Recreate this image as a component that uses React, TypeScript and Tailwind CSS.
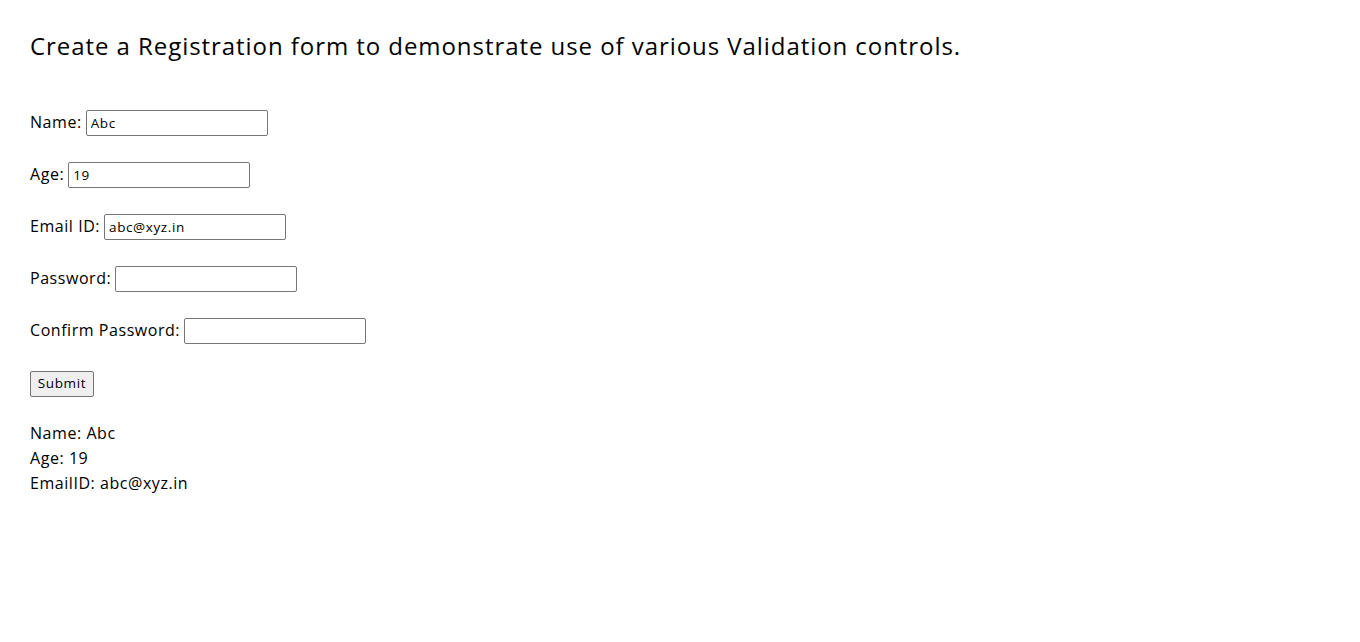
import React from "react";

const font = { fontFamily: '"Open Sans", "Noto Sans", sans-serif' };

function Row({ label, value }: { label: string; value: string }) {
  return (
    <div className="flex items-center h-[26px] text-[16px] tracking-[0.55px] text-black">
      <span className="mr-[4px] pb-[3px]">{label}</span>
      <input
        readOnly
        value={value}
        className="w-[182px] h-[26px] border border-[#767676] rounded-[2px] px-[4px] text-[13.5px] tracking-[0.6px] text-black outline-none"
        style={font}
      />
    </div>
  );
}

export default function App() {
  return (
    <div className="bg-white min-h-[642px] pl-[30px] pt-[28px] text-black" style={font}>
      <h2 className="text-[24px] leading-[36px] font-normal tracking-[0.94px]">
        Create a Registration form to demonstrate use of various Validation controls.
      </h2>
      <div className="mt-[46px] flex flex-col gap-[26px]">
        <Row label="Name:" value="Abc" />
        <Row label="Age:" value="19" />
        <Row label="Email ID:" value="abc@xyz.in" />
        <Row label="Password:" value="" />
        <Row label="Confirm Password:" value="" />
        <div className="h-[26px]">
          <button
            className="h-[26px] w-[64px] pb-[1px] bg-[#efefef] border border-[#767676] rounded-[2px] text-[13.5px] tracking-[0.6px] text-black"
            style={font}
          >
            Submit
          </button>
        </div>
      </div>
      <div className="mt-[25px] text-[16px] leading-[25px] tracking-[0.55px]">
        <div>Name: Abc</div>
        <div>Age: 19</div>
        <div>EmailID: abc@xyz.in</div>
      </div>
    </div>
  );
}
